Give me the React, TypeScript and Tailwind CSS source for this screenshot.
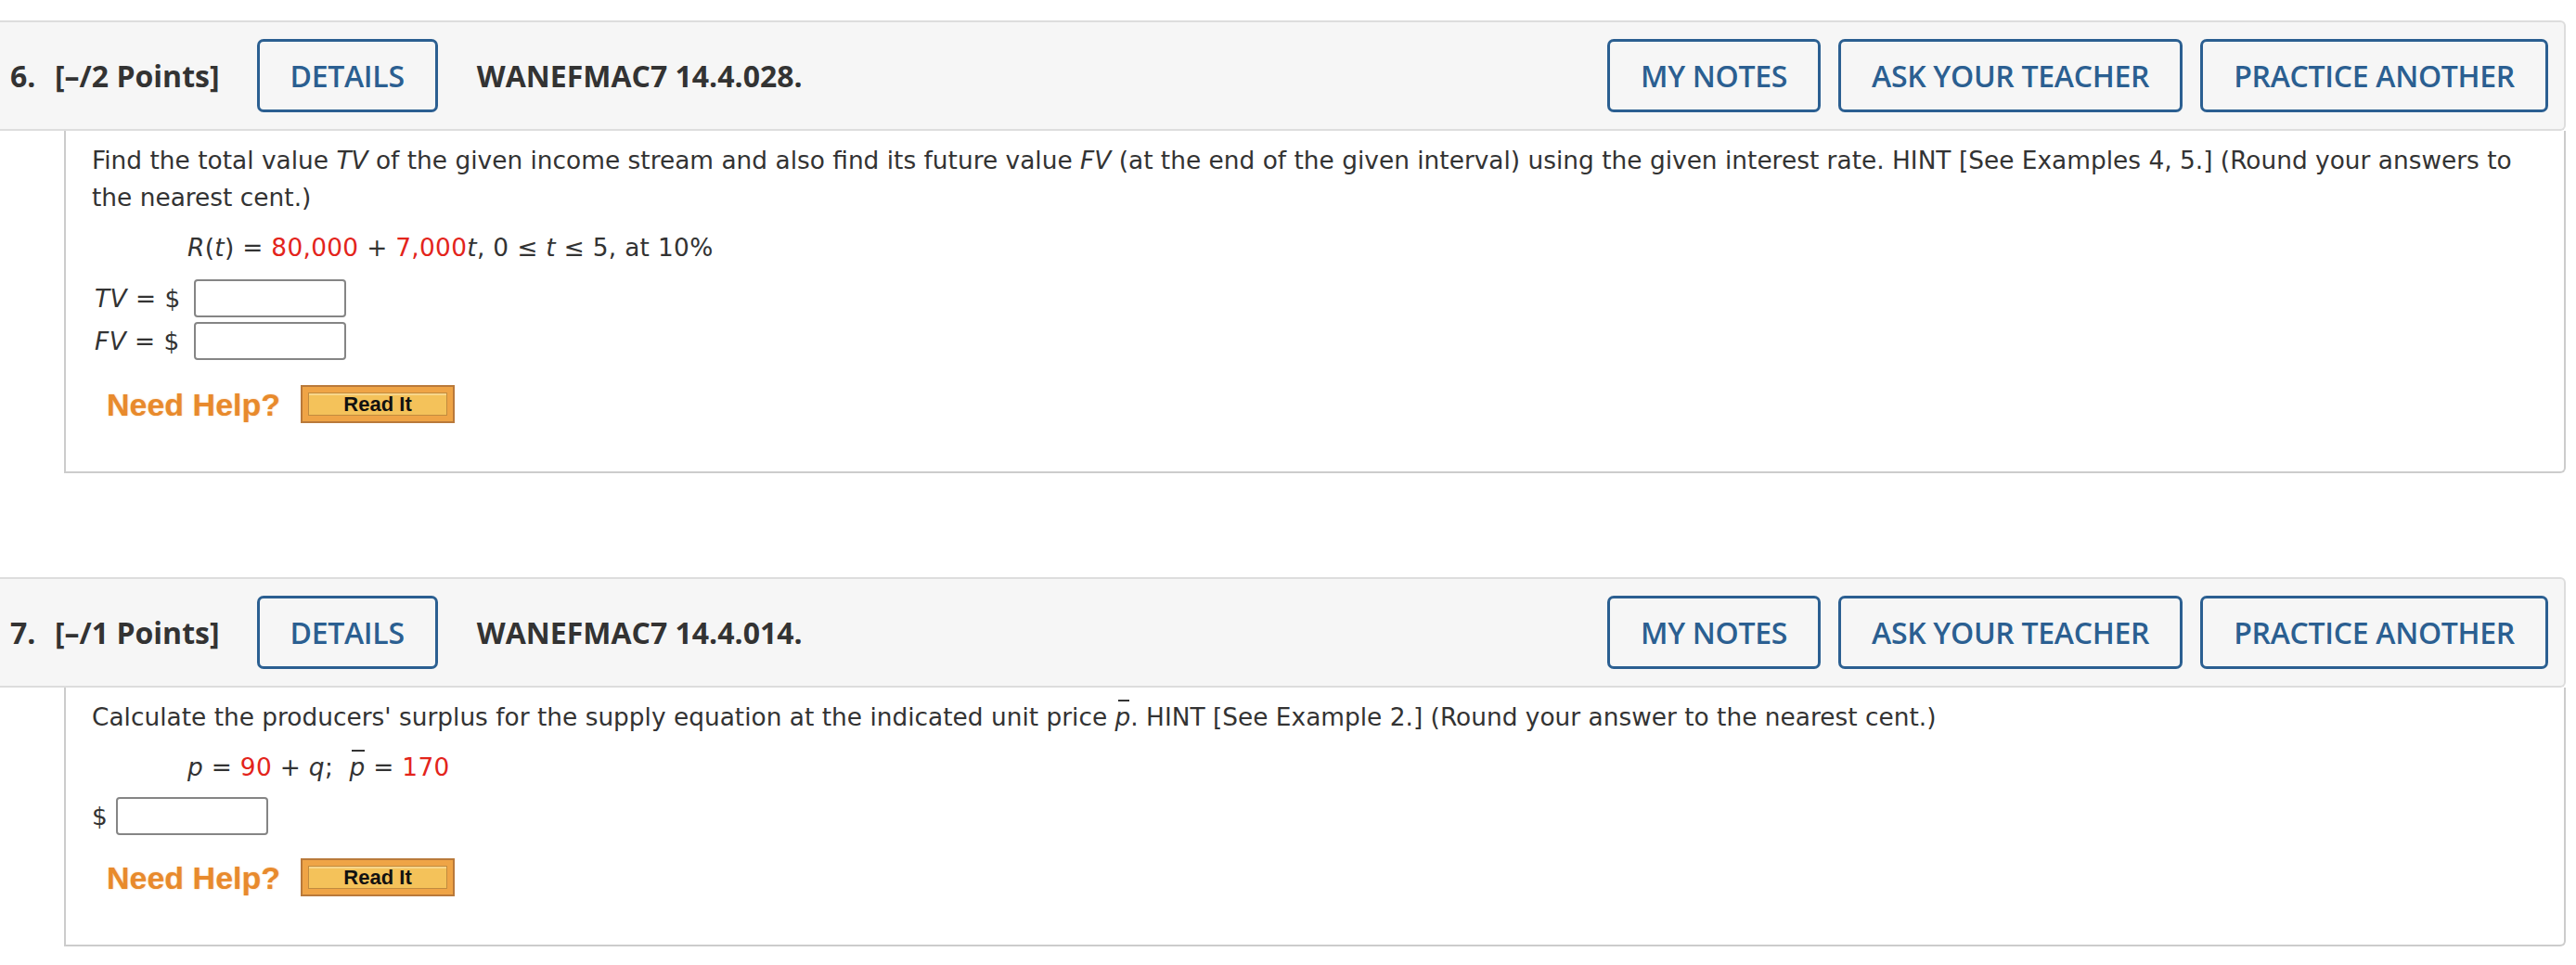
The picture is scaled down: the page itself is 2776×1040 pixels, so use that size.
import React from 'react';

const HEADER_BTN =
  "h-[79px] px-[33px] border-[3px] border-[#2b5f91] rounded-[7px] flex items-center text-[#2b5f91] text-[32px] font-semibold tracking-[-0.3px] bg-[#f6f6f6]";

function QuestionHeader({ num, points, code }: { num: string; points: string; code: string }) {
  return (
    <div className="h-[119px] flex items-center bg-[#f6f6f6] border-y-2 border-r-2 border-[#dddddd] rounded-tr-[6px] rounded-br-[6px] pl-[11px] pr-[17px] font-['Open_Sans',sans-serif] text-[#333]">
      <span className="text-[32px] font-bold w-[48px]">{num}</span>
      <span className="text-[32px] font-bold">{points}</span>
      <button className={`${HEADER_BTN} ml-[40px]`}>DETAILS</button>
      <span className="ml-[42px] text-[32px] font-bold">{code}</span>
      <div className="ml-auto flex items-center gap-[19px]">
        <button className={HEADER_BTN}>MY NOTES</button>
        <button className={HEADER_BTN}>ASK YOUR TEACHER</button>
        <button className={HEADER_BTN}>PRACTICE ANOTHER</button>
      </div>
    </div>
  );
}

function AnswerBox() {
  return <div className="w-[164px] h-[41px] border-2 border-[#858585] rounded-[4px] bg-white" />;
}

function NeedHelp() {
  return (
    <div className="flex items-center">
      <span className="ml-[16px] font-['Liberation_Sans',Arial,sans-serif] font-bold text-[34px] text-[#e88a2c] [text-shadow:0_0_2px_#f5c89a]">
        Need Help?
      </span>
      <div className="ml-[22px] w-[166px] h-[41px] border-2 border-[#b9793a] bg-[#efa446] p-[6px]">
        <div className="w-full h-full border border-[#c28b3e] bg-[#f4c25a] shadow-[inset_0_2px_0_#f8d68a] flex items-center justify-center font-['Liberation_Sans',Arial,sans-serif] font-bold text-[22px] leading-none text-[#111]">
          Read It
        </div>
      </div>
    </div>
  );
}

function Red({ children }: { children: React.ReactNode }) {
  return <span className="text-[#e3241b]">{children}</span>;
}

function PBar() {
  return (
    <span className="relative inline-block">
      <i>p</i>
      <span className="absolute left-[3px] right-[1px] top-[1px] h-[2px] bg-[#333]" />
    </span>
  );
}

export default function App() {
  return (
    <div className="w-[2776px] h-[1040px] bg-white pt-[22px] pr-[11px] overflow-hidden">
      {/* question 6 */}
      <QuestionHeader num="6." points="[–/2 Points]" code="WANEFMAC7 14.4.028." />
      <div className="ml-[69px] h-[369px] border-x-2 border-b-2 border-[#cccccc] rounded-br-[6px] pl-[28px] pr-[30px] pt-[12px] font-['DejaVu_Sans',Verdana,sans-serif] text-[26.4px] leading-[40px] text-[#333]">
        <p>
          Find the total value <i>TV</i> of the given income stream and also find its future value <i>FV</i> (at the end of
          the given interval) using the given interest rate. HINT [See Examples 4, 5.] (Round your answers to
          <br />
          the nearest cent.)
        </p>
        <div className="mt-[14px] ml-[103px] tracking-[0.3px]">
          <i>R</i>(<i>t</i>) = <Red>80,000</Red> + <Red>7,000</Red>
          <i>t</i>, 0 ≤ <i>t</i> ≤ 5, at 10%
        </div>
        <div className="mt-[14px] flex items-center">
          <span className="ml-[3px] w-[107px] tracking-[0.5px]">
            <i>TV</i> = $
          </span>
          <AnswerBox />
        </div>
        <div className="mt-[5px] flex items-center">
          <span className="ml-[3px] w-[107px] tracking-[0.5px]">
            <i>FV</i> = $
          </span>
          <AnswerBox />
        </div>
        <div className="mt-[27px]">
          <NeedHelp />
        </div>
      </div>

      {/* question 7 */}
      <div className="mt-[112px]">
        <QuestionHeader num="7." points="[–/1 Points]" code="WANEFMAC7 14.4.014." />
      </div>
      <div className="ml-[69px] h-[279px] border-x-2 border-b-2 border-[#cccccc] rounded-br-[6px] pl-[28px] pr-[30px] pt-[12px] font-['DejaVu_Sans',Verdana,sans-serif] text-[26.4px] leading-[40px] text-[#333]">
        <p>
          Calculate the producers' surplus for the supply equation at the indicated unit price <PBar />. HINT [See
          Example 2.] (Round your answer to the nearest cent.)
        </p>
        <div className="mt-[14px] ml-[103px] tracking-[0.3px]">
          <i>p</i> = <Red>90</Red> + <i>q</i>;&nbsp; <PBar /> = <Red>170</Red>
        </div>
        <div className="mt-[12px] flex items-center">
          <span className="w-[26px]">$</span>
          <AnswerBox />
        </div>
        <div className="mt-[25px]">
          <NeedHelp />
        </div>
      </div>
    </div>
  );
}
